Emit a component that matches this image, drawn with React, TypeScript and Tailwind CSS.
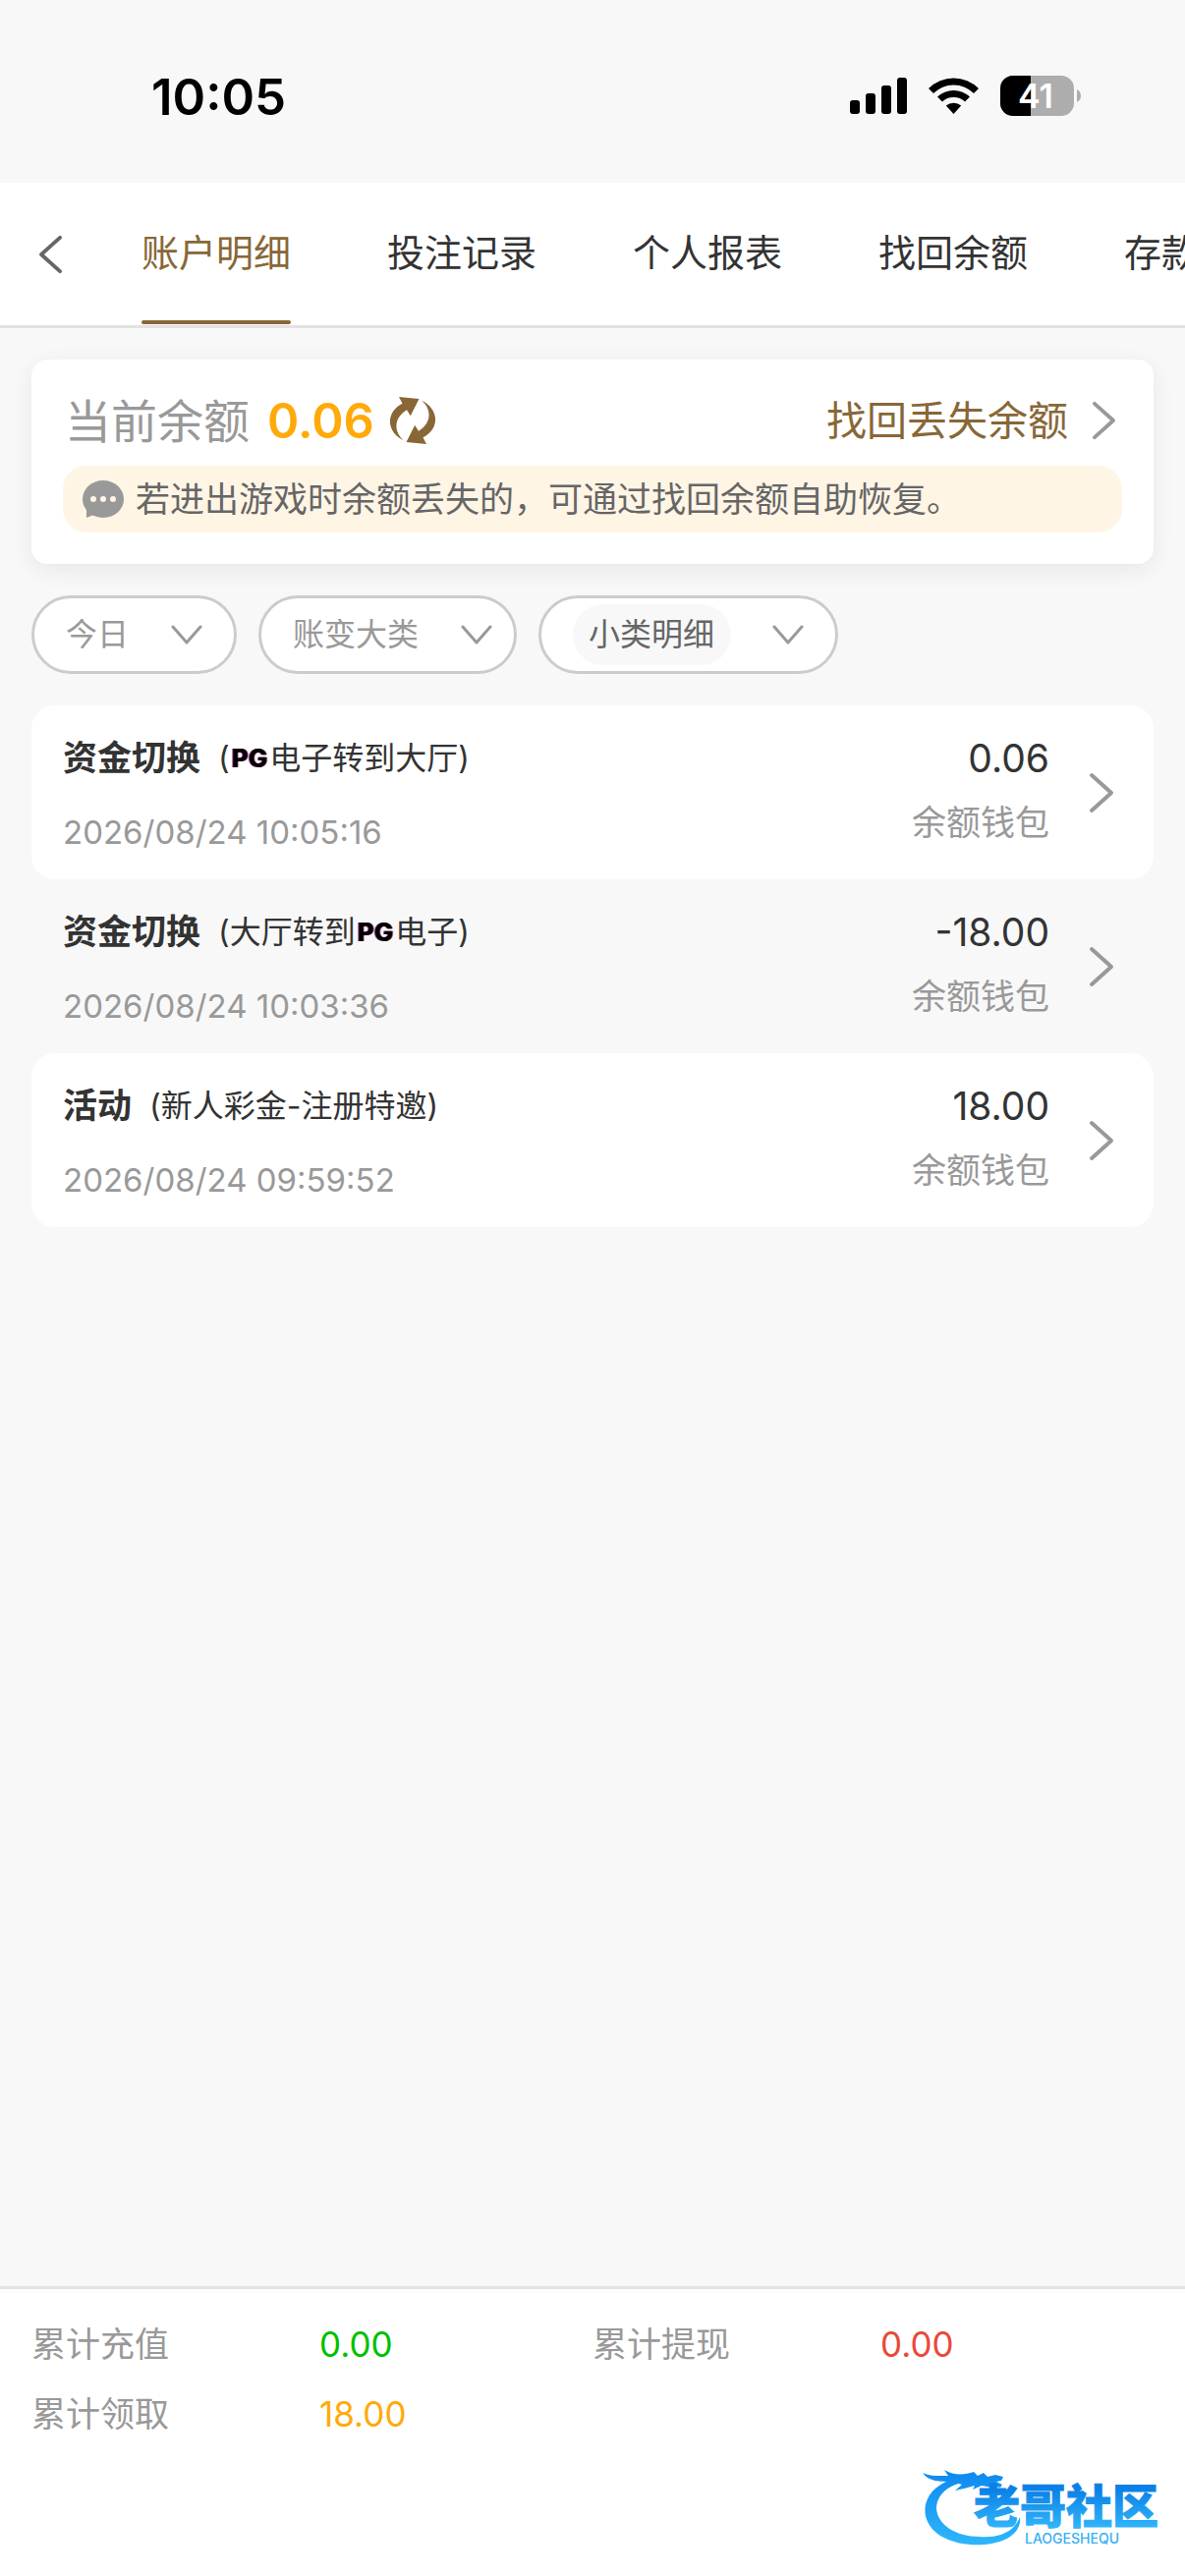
type Entry = {
  title: string;
  before: string;
  provider?: string;
  after: string;
  time: string;
  amount: string;
};

const tabs = ['账户明细', '投注记录', '个人报表', '找回余额', '存款记录'];

const entries: Entry[] = [
  { title: '资金切换', before: '(', provider: 'PG', after: '电子转到大厅)', time: '2026/08/24 10:05:16', amount: '0.06' },
  { title: '资金切换', before: '(大厅转到', provider: 'PG', after: '电子)', time: '2026/08/24 10:03:36', amount: '-18.00' },
  { title: '活动', before: '(新人彩金-注册特邀)', after: '', time: '2026/08/24 09:59:52', amount: '18.00' },
];

const totals = [
  { label: '累计充值', value: '0.00', color: 'text-[#00c000]' },
  { label: '累计提现', value: '0.00', color: 'text-[#e8493a]' },
  { label: '累计领取', value: '18.00', color: 'text-[#ffaa0a]' },
];

const filters = [
  { name: '日期', value: '今日', select: 'text-[#999]', pill: 'pr-8' },
  { name: '账变大类', value: '账变大类', select: 'text-[#999]', pill: 'pr-[22px]' },
  { name: '小类明细', value: '小类明细', select: 'rounded-full bg-[#f8f8f8] px-4 text-[#666]', pill: 'pr-8' },
];

function Chevron({ className }: { className: string }) {
  return (
    <svg viewBox="0 0 26 42" className={className} fill="none" stroke="currentColor" strokeWidth="4" strokeLinecap="round" strokeLinejoin="round" aria-hidden="true">
      <path d="M3 3 L23 21 L3 39" />
    </svg>
  );
}

function StatusBar() {
  return (
    <div className="flex h-[186px] items-center justify-between pt-2 pr-[106px] pl-[154px] text-black">
      <span className="pt-1 text-[51px] font-semibold">10:05</span>
      <svg viewBox="0 0 236 44" className="h-11 w-[236px]" aria-hidden="true">
        <rect x="1" y="27" width="10" height="14" rx="3" />
        <rect x="17" y="20" width="10" height="21" rx="3" />
        <rect x="33" y="12" width="10" height="29" rx="3" />
        <rect x="49" y="4" width="10" height="37" rx="3" />
        <path d="M81 15 A36 36 0 0 1 132 15 L127 20 A29 29 0 0 0 86 20 Z" />
        <path d="M90 23.500 A24 24 0 0 1 123 23.500 L118 28.500 A17 17 0 0 0 95 28.500 Z" />
        <path d="M98.800 32.500 A12 12 0 0 1 114.200 32.500 L106.500 41 Z" />
        <rect x="154" y="2" width="75" height="41" rx="13" fill="#adadad" />
        <path d="M167 2 H185 V43 H167 A13 13 0 0 1 154 30 V15 A13 13 0 0 1 167 2 Z" />
        <path d="M232 16 Q236 18 236 22.500 Q236 27 232 29 Z" fill="#adadad" />
        <text x="190" y="35" textAnchor="middle" fill="#fff" className="text-[34px] font-semibold">41</text>
      </svg>
    </div>
  );
}

function TabBar() {
  return (
    <header className="flex h-[148px] items-stretch overflow-hidden border-b-3 border-[#e2e2e2] bg-white">
      <button type="button" aria-label="返回" className="flex w-36 shrink-0 items-center pl-[39px] text-[#666]">
        <Chevron className="h-10 w-[25px] rotate-180" />
      </button>
      <nav className="flex gap-[98px]">
        {tabs.map((tab, i) => (
          <a
            key={tab}
            href="#"
            className={`relative flex shrink-0 items-center pb-1 text-[38px] leading-none ${i === 0 ? 'text-[#886737]' : 'text-[#333]'}`}
          >
            {tab}
            {i === 0 && <span className="absolute inset-x-0 bottom-px h-1 rounded-full bg-[#886737]" />}
          </a>
        ))}
      </nav>
    </header>
  );
}

function BalanceCard() {
  return (
    <section className="rounded-2xl bg-white px-8 pt-6 pb-8 shadow-[0_6px_24px_rgba(0,0,0,0.07)]">
      <div className="mb-1 flex h-20 items-center pb-1">
        <span className="pl-0.5 text-[47px] leading-none text-[#999]">当前余额</span>
        <strong className="ml-[18px] text-[49px] leading-none font-semibold text-[#ffaa0a]">0.06</strong>
        <button type="button" aria-label="刷新余额" className="ml-4 text-[#886737]">
          <svg viewBox="0 0 46 48" className="h-12 w-[46px]" fill="currentColor" aria-hidden="true">
            <path d="M9 0 L29.500 2 L20.800 19.300 L17 13.300 C4 21 3 35 14 44.500 C-5 35 -4 15 12.500 6.700 Z" />
            <path transform="rotate(180 23 24)" d="M9 0 L29.500 2 L20.800 19.300 L17 13.300 C4 21 3 35 14 44.500 C-5 35 -4 15 12.500 6.700 Z" />
          </svg>
        </button>
        <a href="#" className="ml-auto flex items-center gap-6 pr-1.5 text-[41px] leading-none text-[#886737]">
          找回丢失余额
          <Chevron className="h-10 w-[25px] text-[#999]" />
        </a>
      </div>
      <p className="flex h-[68px] items-center gap-3 rounded-3xl bg-[#fff5e5] pl-5 text-[35px] leading-none text-[#666]">
        <svg viewBox="0 0 42 38" className="h-[38px] w-[42px] shrink-0" aria-hidden="true">
          <ellipse cx="21" cy="19" rx="21" ry="19" fill="#999" />
          <path d="M4 26 V38 L14 34 Z" fill="#999" />
          <circle cx="11" cy="19" r="3" fill="#fff5e5" />
          <circle cx="21" cy="19" r="3" fill="#fff5e5" />
          <circle cx="31" cy="19" r="3" fill="#fff5e5" />
        </svg>
        若进出游戏时余额丢失的，可通过找回余额自助恢复。
      </p>
    </section>
  );
}

function Filters() {
  return (
    <div className="flex gap-[22px]">
      {filters.map((filter) => (
        <label key={filter.name} className={`flex h-20 items-center gap-[42px] rounded-full border-3 border-[#ccc] bg-white pl-8 ${filter.pill}`}>
          <select aria-label={filter.name} className={`h-[62px] appearance-none text-[32px] leading-none ${filter.select}`}>
            <option>{filter.value}</option>
          </select>
          <svg viewBox="0 0 32 20" className="h-5 w-8 text-[#999]" fill="none" stroke="currentColor" strokeWidth="3" strokeLinecap="round" strokeLinejoin="round" aria-hidden="true">
            <path d="M2 2 L16 18 L30 2" />
          </svg>
        </label>
      ))}
    </div>
  );
}

function EntryRow({ entry, shaded }: { entry: Entry; shaded: boolean }) {
  return (
    <li>
      <a href="#" className={`flex h-[177px] items-center rounded-3xl pr-10 pl-8 ${shaded ? 'bg-[#f8f8f8]' : 'bg-white'}`}>
        <div className="min-w-0 flex-1 pt-1.5">
          <div className="flex h-12 items-center text-[32px] leading-none text-[#333]">
            <strong className="mr-[18px] text-[35px] font-bold">{entry.title}</strong>
            {entry.before}
            {entry.provider && (
              <span className="mx-0.5 text-[26px] leading-none font-extrabold text-black [text-shadow:1px_0_0_#ff7a4d,-1px_0_0_#6a5cff]">
                {entry.provider}
              </span>
            )}
            {entry.after}
          </div>
          <div className="mt-7 flex h-12 items-center text-[33px] leading-none text-[#999]">{entry.time}</div>
        </div>
        <div className="flex flex-col items-end pt-1.5">
          <span className="flex h-12 items-center text-[39px] leading-none text-[#333]">{entry.amount}</span>
          <span className="mt-[18px] mb-2.5 flex h-12 items-center text-[35px] leading-none text-[#999]">余额钱包</span>
        </div>
        <Chevron className="ml-10 h-[42px] w-[26px] text-[#999]" />
      </a>
    </li>
  );
}

function CommunityLogo() {
  return (
    <svg viewBox="0 0 260 96" className="h-24 w-[260px]" role="img" aria-label="老哥社区">
      <defs>
        <linearGradient id="wave" gradientUnits="userSpaceOnUse" x1="0" y1="10" x2="0" y2="92">
          <stop offset="0" stopColor="#0a86f0" />
          <stop offset="1" stopColor="#2fb8fb" />
        </linearGradient>
        <linearGradient id="name" gradientUnits="userSpaceOnUse" x1="0" y1="34" x2="0" y2="72">
          <stop offset="0" stopColor="#0b80e6" />
          <stop offset="1" stopColor="#2fb4fb" />
        </linearGradient>
      </defs>
      <g fill="url(#wave)">
        <path d="M38 22 C12 30 4 46 7 61 C12 82 38 92 67 90 C90 88 105 77 103 62 C98 76 82 84 62 82 C38 82 19 70 18 53 C18 40 29 31 43 27 Z" />
        <path d="M4 17 C12 21 20 20 30 20 L26 14 C36 20 47 19 56 16 L60 20 L66 17 L70 21 L78 19 L86 21 L84 25 L79 26 L85 29 L83 32 L72 29 L75 32 L64 30 L55 34 L57 30 L46 33 L37 35 L44 29 L34 26 C22 26 10 26 4 17 Z" />
      </g>
      <text x="56" y="68" fill="url(#name)" stroke="url(#name)" strokeWidth="1" className="text-[47px] leading-none font-black">老哥社区</text>
      <text x="108" y="89" fill="#39aef5" className="text-[14px] leading-none font-medium">LAOGESHEQU</text>
    </svg>
  );
}

export default function App() {
  return (
    <div className="flex min-h-screen flex-col bg-[#f8f8f8] font-[Inter,'Noto_Sans_CJK_SC',sans-serif]">
      <StatusBar />
      <TabBar />
      <main className="flex flex-1 flex-col gap-8 p-8">
        <BalanceCard />
        <Filters />
        <ul>
          {entries.map((entry, i) => (
            <EntryRow key={entry.time} entry={entry} shaded={i % 2 === 1} />
          ))}
        </ul>
      </main>
      <footer className="border-t-3 border-[#e2e2e2] bg-white pt-[21px] pb-[26px]">
        <dl className="grid grid-cols-2 px-8 text-[35px] leading-none">
          {totals.map((total) => (
            <div key={total.label} className="flex h-[71px] items-center">
              <dt className="w-[293px] text-[#999]">{total.label}</dt>
              <dd className={total.color}>{total.value}</dd>
            </div>
          ))}
        </dl>
        <div className="mt-[7px] flex justify-end pr-[11px]">
          <CommunityLogo />
        </div>
      </footer>
    </div>
  );
}
